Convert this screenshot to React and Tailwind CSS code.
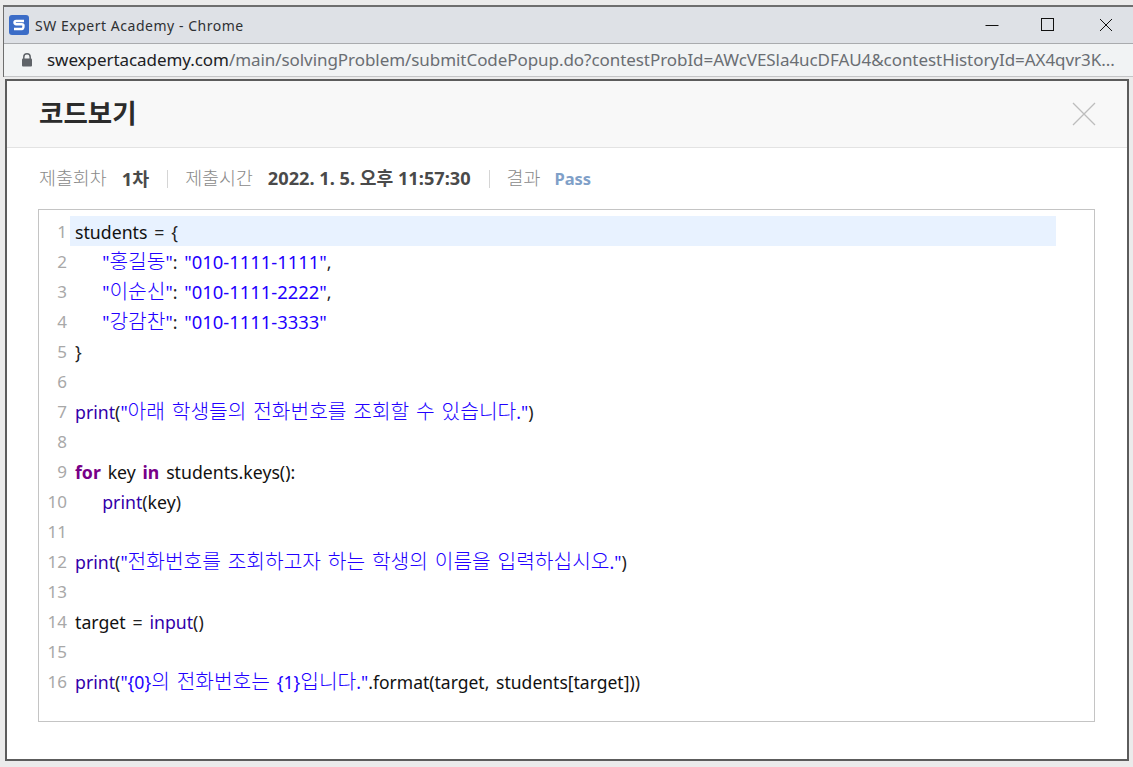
const FONT = "font-['Noto_Sans','Noto_Sans_CJK_KR',sans-serif]";

function Ko({ text }) {
  return text.split(/([가-힣]+)/).map((part, i) =>
    /[가-힣]/.test(part) ? <span key={i} className="text-[20.300px] font-light leading-none">{part}</span> : part
  );
}

const K = ({ children }) => <span className="text-[#708] font-bold">{children}</span>;
const S = ({ children }) => <span className="text-[#2200ff]"><Ko text={children} /></span>;
const N = ({ children }) => <span className="text-[#2200ff] text-[18.400px]">{children}</span>;
const V = ({ children }) => <span className="text-[#111]">{children}</span>;
const F = ({ children }) => <span className="text-[#111] text-[17.500px]">{children}</span>;
const B = ({ children }) => <span className="text-[#3300aa]">{children}</span>;

const lines = [
  <><V>students</V> = {"{"}</>,
  <>{"    "}<S>{'"홍길동"'}</S>: <N>"010-1111-1111"</N>,</>,
  <>{"    "}<S>{'"이순신"'}</S>: <N>"010-1111-2222"</N>,</>,
  <>{"    "}<S>{'"강감찬"'}</S>: <N>"010-1111-3333"</N></>,
  <>{"}"}</>,
  <></>,
  <><B>print</B>(<S>{'"아래 학생들의 전화번호를 조회할 수 있습니다."'}</S>)</>,
  <></>,
  <><K>for</K> <V>key</V> <K>in</K> <V>students.keys():</V></>,
  <>{"    "}<B>print</B>(<V>key</V>)</>,
  <></>,
  <><B>print</B>(<S>{'"전화번호를 조회하고자 하는 학생의 이름을 입력하십시오."'}</S>)</>,
  <></>,
  <><V>target</V> = <B>input</B>()</>,
  <></>,
  <><B>print</B>(<S>{'"{0}의 전화번호는 {1}입니다."'}</S><F>.format(target, students[target])</F>)</>,
];

function Logo() {
  return (
    <div className="w-5 h-5 rounded-[3px] bg-[#3b6cc7] flex items-center justify-center">
      <svg width="14" height="14" viewBox="0 0 14 14" fill="none">
        <path d="M12 3H4.200C3 3 2.500 3.600 2.500 4.600S3 6.200 4.200 6.200h5.600c1.200 0 1.700.6 1.700 1.600S11 11 9.800 11H2" stroke="#fff" strokeWidth="2.400" />
      </svg>
    </div>
  );
}

export default function App() {
  return (
    <div className={`${FONT} w-[1133px] h-[767px] overflow-hidden bg-[#ebebeb] flex flex-col`}>
      <div className="h-[5px] shrink-0 bg-[#ebebeb]" />
      <div className="ml-[3px] border-t-2 border-l border-[#6e6e6e] shrink-0">
        <div className="h-[37px] bg-[#dee1e6] border-b border-[#a9abae] flex items-center pl-[5px]">
          <Logo />
          <span className="ml-[6px] text-[14px] tracking-[0.53px] text-[#2e3033]">SW Expert Academy - Chrome</span>
          <div className="ml-auto flex items-center">
            <svg width="14" height="14" viewBox="0 0 14 14" className="mr-[42px]"><path d="M0.500 7.500H13.500" stroke="#111" strokeWidth="1" /></svg>
            <svg width="14" height="14" viewBox="0 0 14 14" className="mr-[44px]"><rect x="0.500" y="0.500" width="12" height="12" fill="none" stroke="#111" /></svg>
            <svg width="14" height="14" viewBox="0 0 14 14" className="mr-[20px]"><path d="M1 1L13 13M13 1L1 13" stroke="#111" strokeWidth="1" /></svg>
          </div>
        </div>
        <div className="h-[33px] bg-[#f1f3f4] border-b border-[#c4c5c7] flex items-center pl-[17px] pr-[16px]">
          <svg width="12" height="14" viewBox="0 0 12 14" className="shrink-0">
            <path d="M2.800 6V4a3.200 3.200 0 0 1 6.400 0v2" fill="none" stroke="#5f6368" strokeWidth="1.500" />
            <rect x="1" y="5.500" width="10" height="8" rx="1" fill="#5f6368" />
          </svg>
          <div className="ml-[14px] text-[17px] tracking-[-0.06px] whitespace-nowrap overflow-hidden">
            <span className="text-[#202124]">swexpertacademy.com</span>
            <span className="text-[#6a6e73]">/main/solvingProblem/submitCodePopup.do?contestProbId=AWcVESla4ucDFAU4&amp;contestHistoryId=AX4qvr3K...</span>
          </div>
        </div>
      </div>
      <div className="h-[2px] shrink-0 bg-[#ebebeb]" />
      <div className="ml-[5px] w-[1124px] h-[682px] border-2 border-[#5c5c5c] bg-white shrink-0 flex flex-col">
        <div className="h-[67px] shrink-0 bg-[#f8f8f8] border-b border-[#e3e3e3] flex items-center justify-between pl-[32px] pr-[31px]">
          <h1 className="text-[26.500px] font-bold text-[#2b2b2b]">코드보기</h1>
          <svg width="24" height="24" viewBox="0 0 24 24"><path d="M1 1L23 23M23 1L1 23" stroke="#bdbdbd" strokeWidth="1.300" /></svg>
        </div>
        <div className="flex items-center h-[61px] pl-[32px] text-[18.400px] text-[#8a8a8a] shrink-0">
          <span className="font-light -mt-[2px]">제출회차</span>
          <span className="ml-[15px] font-bold text-[#4a4a4a]">1차</span>
          <span className="ml-[18px] mr-[17px] w-px h-[18px] bg-[#d5d5d5]" />
          <span className="font-light -mt-[2px]">제출시간</span>
          <span className="ml-[15px] font-bold text-[18.200px] text-[#4a4a4a]">2022. 1. 5. 오후 11:57:30</span>
          <span className="ml-[18px] mr-[17px] w-px h-[18px] bg-[#d5d5d5]" />
          <span className="font-light -mt-[2px]">결과</span>
          <span className="ml-[14px] mt-[2px] font-bold text-[#7fa0c8] text-[16.500px]">Pass</span>
        </div>
        <div className="ml-[31px] mr-[32px] h-[513px] border border-[#c4c4c4] pt-[6px] pr-[38px] text-[17.700px] [word-spacing:2.200px] text-[#222] shrink-0">
          {lines.map((line, i) => (
            <div key={i} className="flex h-[30px]">
              <div className="w-[28px] shrink-0 flex items-center justify-end pt-[2px] text-[#a8a8a8] text-[17px]">{i + 1}</div>
              <div className={`ml-[3px] flex-1 h-full flex items-center pt-[2px] pl-[5px] whitespace-pre ${i === 0 ? "bg-[#e8f2ff]" : ""}`}>
                <span>{line}</span>
              </div>
            </div>
          ))}
        </div>
      </div>
    </div>
  );
}
